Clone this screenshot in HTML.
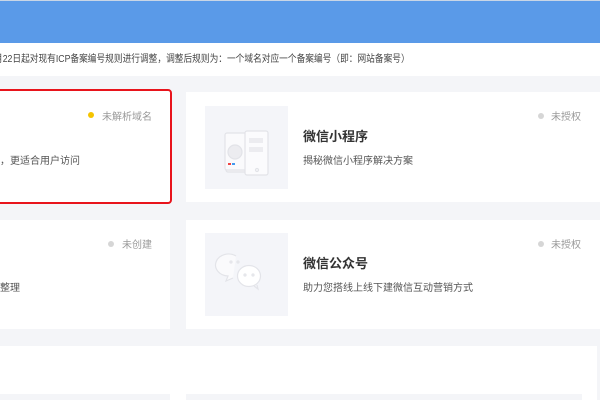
<!DOCTYPE html><html><head><meta charset="utf-8"><style>
*{margin:0;padding:0;box-sizing:border-box}
body{width:600px;height:400px;overflow:hidden;background:#f4f5f8;position:relative;font-family:"Liberation Sans","Noto Sans CJK SC",sans-serif}
.hd{position:absolute;left:0;top:0;width:600px;height:43px;background:#5a9ae8;border-top:1px solid #c9d6e6}
.nt{position:absolute;left:0;top:43px;width:600px;height:33px;background:#fff;font-size:10px;color:#444;line-height:33px;white-space:nowrap}
.nt span{display:inline-block;transform:scaleX(0.87);transform-origin:0 50%}
.card{position:absolute;background:#fff}
.st{position:absolute;font-size:10px;color:#999;white-space:nowrap}
.dot{position:absolute;width:6px;height:6px;border-radius:50%;background:#d6d6d6}
.th{position:absolute;width:83px;height:83px;background:#f4f5f9}
.t{position:absolute;font-size:13px;font-weight:bold;color:#333;white-space:nowrap}
.d{position:absolute;font-size:10px;color:#555;white-space:nowrap}
</style></head><body>
<div class="hd"></div>
<div class="nt"><span style="margin-left:-6px">月22日起对现有ICP备案编号规则进行调整，调整后规则为：一个域名对应一个备案编号（即：网站备案号）</span></div>

<div class="card" style="left:-5px;top:89px;width:177px;height:115px;border:2px solid #e8141c;border-radius:4px"></div>
<div class="dot" style="left:88px;top:112px;background:#f5c400"></div>
<div class="st" style="left:102px;top:108px">未解析域名</div>
<div class="d" style="left:0;top:152px">，更适合用户访问</div>

<div class="card" style="left:186px;top:92px;width:414px;height:110px"></div>
<div class="th" style="left:205px;top:106px"><svg width="83" height="83" viewBox="0 0 83 83" fill="none" stroke="#e2e3e8" stroke-width="1.2"><rect x="21" y="29" width="22" height="37" rx="2" fill="#f7f7fa"/><rect x="20" y="27" width="22" height="37" rx="2" fill="#fafafc"/><circle cx="30" cy="46" r="7" fill="#ececf0"/><rect x="40" y="25" width="23" height="44" rx="2" fill="#fbfbfd"/><rect x="44" y="32" width="14" height="5" fill="#ececf0" stroke="none"/><rect x="44" y="41" width="14" height="5" fill="#ececf0" stroke="none"/><circle cx="52" cy="64" r="1.5"/><rect x="23" y="57" width="3" height="2" fill="#e44" stroke="none"/><rect x="27" y="57" width="3" height="2" fill="#49e" stroke="none"/></svg></div>
<div class="t" style="left:303px;top:126px">微信小程序</div>
<div class="d" style="left:303px;top:152px">揭秘微信小程序解决方案</div>
<div class="dot" style="left:538px;top:113px"></div>
<div class="st" style="left:551px;top:108px">未授权</div>

<div class="card" style="left:0;top:220px;width:170px;height:109px"></div>
<div class="dot" style="left:108px;top:241px"></div>
<div class="st" style="left:122px;top:236px">未创建</div>
<div class="d" style="left:0;top:279px">整理</div>

<div class="card" style="left:186px;top:220px;width:414px;height:109px"></div>
<div class="th" style="left:205px;top:233px"><svg width="83" height="83" viewBox="0 0 83 83" fill="none" stroke="#e3e4e9" stroke-width="1.2"><path d="M31 23a13 11 0 1 0-8 20l-2 5 7-3" fill="#fafafc"/><ellipse cx="44" cy="43" rx="11.5" ry="10.5" fill="#fff"/><path d="M49 53l4 3-1-4"/><circle cx="26" cy="29" r="1"/><circle cx="33" cy="29" r="1"/><circle cx="40" cy="42" r="1"/><circle cx="48" cy="42" r="1"/></svg></div>
<div class="t" style="left:303px;top:253px">微信公众号</div>
<div class="d" style="left:303px;top:279px">助力您搭线上线下建微信互动营销方式</div>
<div class="dot" style="left:538px;top:241px"></div>
<div class="st" style="left:551px;top:236px">未授权</div>

<div class="card" style="left:0;top:346px;width:597px;height:54px"></div>
<div style="position:absolute;left:0;top:394px;width:170px;height:6px;background:#f4f5f8"></div>
<div style="position:absolute;left:186px;top:394px;width:396px;height:6px;background:#f4f5f8"></div>
</body></html>
